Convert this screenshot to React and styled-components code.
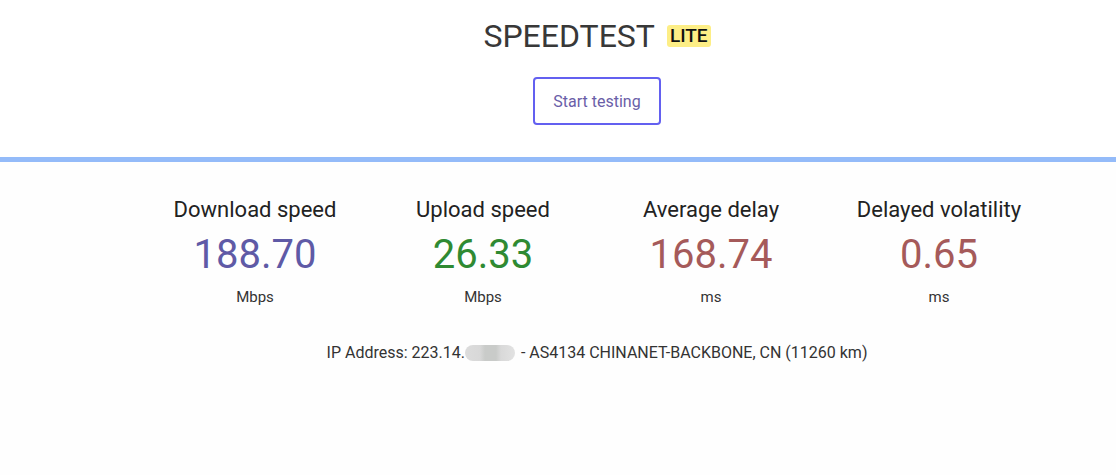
import React from 'react';
import styled, { createGlobalStyle } from 'styled-components';

const GlobalStyle = createGlobalStyle`
    html, body {
        margin: 0;
        padding: 0;
        background: #fefefe;
        font-family: Roboto, "Liberation Sans", sans-serif;
    }
`;

const Page = styled.div`
    width: 100%;
    min-height: 475px;
`;

const Header = styled.header`
    background: #ffffff;
    border-bottom: 5px solid #94bbf9;
    padding: 18px 0 32px 78px; /* content sits a little right of the window centre */
    display: flex;
    flex-direction: column;
    align-items: center;
    gap: 23px;
`;

const Title = styled.h1`
    margin: 0;
    display: flex;
    align-items: center;
    gap: 12px;
    font-size: 32px;
    font-weight: 400;
    color: #383838;
    line-height: 36px;
`;

const Badge = styled.span`
    background: #fdee86;
    color: #111;
    font-size: 19px;
    font-weight: 500;
    line-height: 22px;
    padding: 0 3px;
    border-radius: 3px;
`;

const StartButton = styled.button`
    width: 128px;
    height: 48px;
    border: 2px solid #6360f0;
    border-radius: 4px;
    background: #fff;
    color: #6a5ea8;
    font-family: inherit;
    font-size: 16px;
    cursor: pointer;
`;

const Body = styled.main`
    padding: 33px 0 0 78px;
    display: flex;
    flex-direction: column;
    align-items: center;
`;

const Stats = styled.div`
    display: grid;
    grid-template-columns: repeat(4, 228px);
`;

const Stat = styled.div`
    display: flex;
    flex-direction: column;
    align-items: center;
`;

const Label = styled.div`
    font-size: 22px;
    color: #222;
    line-height: 30px;
`;

const Value = styled.div`
    font-size: 40px;
    line-height: 46px;
    color: ${({ $color }) => $color};
    margin-top: 7px;
`;

const Unit = styled.div`
    font-size: 15px;
    color: #333;
    margin-top: 10px;
`;

const IpLine = styled.div`
    margin-top: 37px;
    font-size: 16px;
    color: #333;
    display: flex;
    align-items: center;
`;

const Masked = styled.span`
    display: inline-block;
    width: 50px;
    height: 16px;
    margin: 0 2px 0 0;
    border-radius: 8px;
    background: linear-gradient(90deg, #dcdcdc 0%, #d8d8d8 30%, #c9cbc9 40%, #c9cbc9 62%, #d9d9d9 72%, #e2e2e2 100%);
`;

const stats = [
    { label: 'Download speed', value: '188.70', unit: 'Mbps', color: '#5f5aa6' },
    { label: 'Upload speed', value: '26.33', unit: 'Mbps', color: '#2f8a32' },
    { label: 'Average delay', value: '168.74', unit: 'ms', color: '#a55a5a' },
    { label: 'Delayed volatility', value: '0.65', unit: 'ms', color: '#a55a5a' },
];

export default function App() {
    return (
        <Page>
            <GlobalStyle />
            <Header>
                <Title>
                    SPEEDTEST <Badge>LITE</Badge>
                </Title>
                <StartButton>Start testing</StartButton>
            </Header>
            <Body>
                <Stats>
                    {stats.map((s) => (
                        <Stat key={s.label}>
                            <Label>{s.label}</Label>
                            <Value $color={s.color}>{s.value}</Value>
                            <Unit>{s.unit}</Unit>
                        </Stat>
                    ))}
                </Stats>
                <IpLine>
                    IP Address: 223.14.<Masked />&nbsp;- AS4134 CHINANET-BACKBONE, CN (11260 km)
                </IpLine>
            </Body>
        </Page>
    );
}
